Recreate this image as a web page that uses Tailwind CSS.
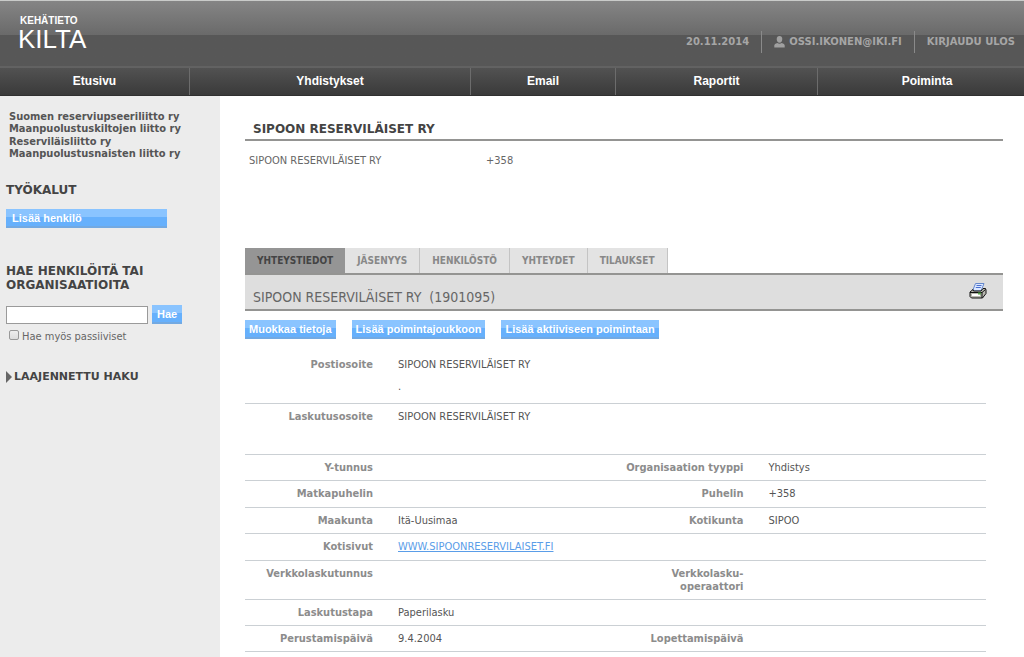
<!DOCTYPE html>
<html lang="fi">
<head>
<meta charset="utf-8">
<meta name="viewport" content="width=device-width, initial-scale=1">
<title>Kehätieto Kilta</title>
<script src="https://cdn.jsdelivr.net/npm/@tailwindcss/browser@4"></script>
</head>
<body class="flex min-h-screen flex-col overflow-x-hidden bg-white font-['DejaVu_Sans_Condensed','DejaVu_Sans',sans-serif] text-[11px] leading-[13px] text-[#555]">

<header class="border-t border-[#c9cbc9] bg-linear-to-b from-[#858585] from-0% via-[#6a6a6a] via-52% to-[#575757] to-52%">
  <div class="flex h-[65px] items-start justify-between pr-[9px] pl-[18px]">
    <a href="#" class="flex flex-col pt-[14px] font-['Liberation_Sans',sans-serif] text-white">
      <span class="pl-[2px] text-[10px] leading-3 font-bold">KEHÄTIETO</span>
      <span class="text-[26px] leading-6">KILTA</span>
    </a>
    <div class="flex pt-[30px] font-['DejaVu_Sans',sans-serif] text-[10px] leading-[22px] font-bold text-[#a6a6a6]">
      <span class="pr-3">20.11.2014</span>
      <a href="#" class="flex items-center gap-1 border-l border-[#8a8a8a] px-3">
        <svg class="h-3 w-[11px]" viewBox="0 0 11 12" fill="#a0a0a0"><path d="M5.500 0C7.300 0 8.300 1.200 8.300 3C8.300 5 7.100 6.800 5.500 6.800S2.700 5 2.700 3C2.700 1.200 3.700 0 5.500 0Z"/><path d="M.3 11.500V9.300Q.3 7.700 3.200 7Q5.500 8.600 7.800 7Q10.700 7.700 10.700 9.300V11.500Z"/></svg>
        OSSI.IKONEN@IKI.FI
      </a>
      <a href="#" class="border-l border-[#8a8a8a] pl-3">KIRJAUDU ULOS</a>
    </div>
  </div>
</header>
<nav class="grid grid-cols-[190fr_281fr_145fr_202fr_206fr] border-t-2 border-b border-t-[#626262] border-b-[#303030] bg-linear-to-b from-[#525252] to-[#3a3a3a] text-center font-['Liberation_Sans',sans-serif] text-[12px] leading-[27px] font-bold text-white">
  <a href="#" class="border-r border-[#6c6c6c]">Etusivu</a>
  <a href="#" class="border-r border-[#6c6c6c]">Yhdistykset</a>
  <a href="#" class="border-r border-[#6c6c6c]">Email</a>
  <a href="#" class="border-r border-[#6c6c6c]">Raportit</a>
  <a href="#" class="pr-3 pl-6">Poiminta</a>
</nav>

<div class="flex grow">
  <aside class="w-[220px] shrink-0 bg-[#ececec] px-[6px] pt-[14px] text-[#444]">
    <ul class="pl-[3px] font-bold text-[#555]">
      <li class="h-3"><a href="#">Suomen reserviupseeriliitto ry</a></li>
      <li class="h-[13px]"><a href="#">Maanpuolustuskiltojen liitto ry</a></li>
      <li class="h-3"><a href="#">Reserviläisliitto ry</a></li>
      <li class="h-[13px]"><a href="#">Maanpuolustusnaisten liitto ry</a></li>
    </ul>
    <h2 class="mt-[23px] font-['DejaVu_Sans',sans-serif] text-[12px] leading-[14px] font-bold">TYÖKALUT</h2>
    <button type="button" class="mt-3 block h-[19px] w-[161px] border-b-2 border-[#72a9e2] bg-linear-to-b from-[#8ac4ff] from-45% to-[#66b0fc] to-45% px-[6px] text-left font-['Liberation_Sans',sans-serif] leading-[18px] font-bold text-white">Lisää henkilö</button>
    <form>
      <h2 class="mt-9 font-['DejaVu_Sans',sans-serif] text-[12px] leading-[14px] font-bold">HAE HENKILÖITÄ TAI<br>ORGANISAATIOITA</h2>
      <div class="mt-[13px] flex items-center gap-1">
        <input type="text" aria-label="Hae henkilöitä tai organisaatioita" class="h-[18px] w-[142px] border border-[#9a9a9a] bg-white px-1">
        <button type="button" class="h-[19px] border-b-2 border-[#72a9e2] bg-linear-to-b from-[#8ac4ff] from-45% to-[#66b0fc] to-45% px-[5px] font-['Liberation_Sans',sans-serif] leading-[18px] font-bold text-white">Hae</button>
      </div>
      <label class="mt-[6px] flex gap-[3px] pl-[3px] text-[#666]">
        <input type="checkbox" class="h-[10px] w-[10px] appearance-none rounded-[2px] border border-[#999] bg-linear-to-b from-[#eee] to-[#ddd] checked:bg-[#66b0fc]">
        Hae myös passiiviset
      </label>
    </form>
    <h2 class="mt-[27px] font-['DejaVu_Sans',sans-serif] text-[11px] leading-[14px] font-bold">
      <a href="#" class="flex items-center gap-[2px]">
        <svg class="h-3 w-[6px]" viewBox="0 0 6 12"><path d="M0 0L6 6L0 12Z" fill="#666"/></svg>LAAJENNETTU HAKU
      </a>
    </h2>
  </aside>

  <main class="min-w-0 grow pt-[26px] pr-[21px] pl-[25px]">
    <h1 class="border-b-2 border-[#949492] px-2 pb-[3px] font-['DejaVu_Sans',sans-serif] text-[12px] leading-[14px] font-bold text-[#444]">SIPOON RESERVILÄISET RY</h1>
    <div class="flex h-[107px] pt-[13px] pl-1 text-[#666]">
      <span class="w-[237px]">SIPOON RESERVILÄISET RY</span>
      <span>+358</span>
    </div>

    <nav class="flex text-[10px] leading-[25px] font-bold text-[#888]">
      <a href="#" aria-current="page" class="bg-[#959595] px-3 text-[#444]">YHTEYSTIEDOT</a>
      <a href="#" class="border-r border-[#c4c4c4] bg-[#e3e3e3] px-3">JÄSENYYS</a>
      <a href="#" class="border-r border-[#c4c4c4] bg-[#e3e3e3] px-3">HENKILÖSTÖ</a>
      <a href="#" class="border-r border-[#c4c4c4] bg-[#e3e3e3] px-3">YHTEYDET</a>
      <a href="#" class="border-r border-[#c4c4c4] bg-[#e3e3e3] px-3">TILAUKSET</a>
    </nav>
    <div class="flex h-[38px] items-start justify-between border-y-2 border-[#949492] bg-[#dedede] pr-4 pl-2">
      <h2 class="pt-[14px] text-[14px] leading-4 whitespace-pre text-[#666]">SIPOON RESERVILÄISET RY  (1901095)</h2>
      <button type="button" aria-label="Tulosta" class="mt-2">
        <svg class="h-4 w-[18px]" viewBox="0 0 18 16" stroke-linejoin="round"><path d="M6.500 0.500H15L12 8H3.500Z" fill="#dce8ff" stroke="#6688cc"/><path d="M7.500 2.500H12.500M6.800 4.500H11.800" stroke="#4a70d0"/><path d="M1 9L4 6.500L4.500 8H12L14 5.500H16.500L17 7V10.500L13.500 15H2.500L1 13.500Z" fill="#b8b8b0" stroke="#111"/><path d="M1 9.500H13L16.500 6.500M13 9.500V15" fill="none" stroke="#111"/><path d="M3 12H11" stroke="#fff" stroke-width="2"/><path d="M9 10.500H12" stroke="#55a048" stroke-width="2"/></svg>
      </button>
    </div>

    <div class="mt-[9px] flex gap-4 font-['Liberation_Sans',sans-serif] leading-[18px] text-white">
      <button type="button" class="h-[19px] border-b-2 border-[#72a9e2] bg-linear-to-b from-[#8ac4ff] from-45% to-[#66b0fc] to-45% px-1 font-bold">Muokkaa tietoja</button>
      <button type="button" class="h-[19px] border-b-2 border-[#72a9e2] bg-linear-to-b from-[#8ac4ff] from-45% to-[#66b0fc] to-45% px-1 font-bold">Lisää poimintajoukkoon</button>
      <button type="button" class="h-[19px] border-b-2 border-[#72a9e2] bg-linear-to-b from-[#8ac4ff] from-45% to-[#66b0fc] to-45% px-1 font-bold">Lisää aktiiviseen poimintaan</button>
    </div>

    <div class="mt-[13px] pr-[17px]">
      <table class="w-full table-fixed border-collapse text-left [&_td]:py-[6px] [&_td]:pl-[25px] [&_td]:align-top [&_th]:py-[6px] [&_th]:text-right [&_th]:align-top [&_th]:font-bold [&_th]:text-[#8c8c8c] [&_tr]:border-b [&_tr]:border-[#cbd0d4]">
        <colgroup><col class="w-[128px]"><col><col class="w-[128px]"><col></colgroup>
        <tbody>
          <tr class="h-[51px]"><th scope="row">Postiosoite</th><td colspan="3">SIPOON RESERVILÄISET RY<span class="mt-[9px] block">.</span></td></tr>
          <tr class="h-[51px]"><th scope="row">Laskutusosoite</th><td colspan="3">SIPOON RESERVILÄISET RY</td></tr>
          <tr><th scope="row">Y-tunnus</th><td></td><th scope="row">Organisaation tyyppi</th><td>Yhdistys</td></tr>
          <tr class="h-[27px]"><th scope="row">Matkapuhelin</th><td></td><th scope="row">Puhelin</th><td>+358</td></tr>
          <tr><th scope="row">Maakunta</th><td>Itä-Uusimaa</td><th scope="row">Kotikunta</th><td>SIPOO</td></tr>
          <tr class="h-[27px]"><th scope="row">Kotisivut</th><td colspan="3"><a href="#" class="text-[#5a9de8] underline">WWW.SIPOONRESERVILAISET.FI</a></td></tr>
          <tr><th scope="row">Verkkolaskutunnus</th><td></td><th scope="row">Verkkolasku-<br>operaattori</th><td></td></tr>
          <tr><th scope="row">Laskutustapa</th><td colspan="3">Paperilasku</td></tr>
          <tr><th scope="row">Perustamispäivä</th><td>9.4.2004</td><th scope="row">Lopettamispäivä</th><td></td></tr>
        </tbody>
      </table>
    </div>
  </main>
</div>
</body>
</html>
